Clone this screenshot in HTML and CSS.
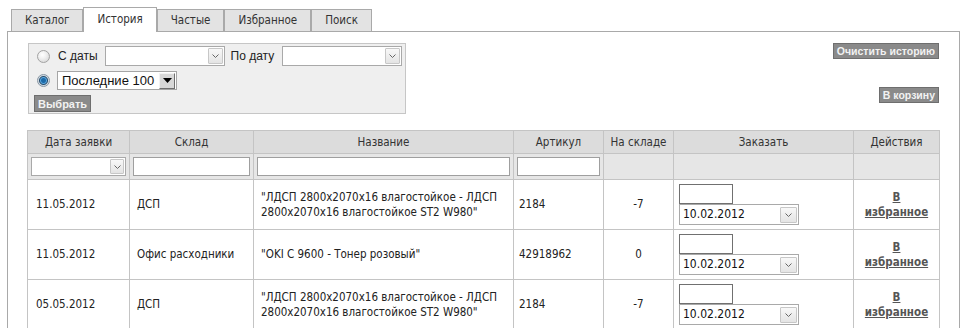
FILE: index.html
```html
<!DOCTYPE html>
<html lang="ru">
<head>
<meta charset="utf-8">
<title>История</title>
<link rel="stylesheet" href="styles.css">
</head>
<body>
<ul class="tabs">
  <li class="tab">Каталог</li>
  <li class="tab active">История</li>
  <li class="tab">Частые</li>
  <li class="tab">Избранное</li>
  <li class="tab">Поиск</li>
</ul>
<div class="panel">
  <div class="top">
    <form class="filter">
      <div class="frow">
        <input type="radio" name="mode" class="radio">
        <label class="lbl">С даты</label>
        <span class="sel w120"><span class="val"></span><span class="arr"><svg width="7" height="4" viewBox="0 0 7 4"><polyline points="0.5,0.5 3.5,3.5 6.5,0.5" fill="none" stroke="#666" stroke-width="1"/></svg></span></span>
        <label class="lbl lbl2">По дату</label>
        <span class="sel w120"><span class="val"></span><span class="arr"><svg width="7" height="4" viewBox="0 0 7 4"><polyline points="0.5,0.5 3.5,3.5 6.5,0.5" fill="none" stroke="#666" stroke-width="1"/></svg></span></span>
      </div>
      <div class="frow frow2">
        <input type="radio" name="mode" class="radio" checked>
        <span class="sel-old"><span class="val">Последние 100</span><span class="drop"><svg width="9" height="5" viewBox="0 0 9 5"><polygon points="0,0 9,0 4.5,5" fill="#000"/></svg></span></span>
      </div>
      <div class="frow frow3">
        <button type="button" class="btn">Выбрать</button>
      </div>
    </form>
    <div class="actions">
      <button type="button" class="btn">Очистить историю</button>
      <button type="button" class="btn btn-cart">В корзину</button>
    </div>
  </div>
  <table class="grid">
    <colgroup>
      <col class="c-date"><col class="c-store"><col class="c-name"><col class="c-art"><col class="c-stock"><col class="c-order"><col class="c-act">
    </colgroup>
    <thead>
      <tr class="hrow">
        <th>Дата заявки</th><th>Склад</th><th>Название</th><th>Артикул</th><th>На складе</th><th>Заказать</th><th>Действия</th>
      </tr>
      <tr class="frow-t">
        <td><span class="sel fsel"><span class="val"></span><span class="arr"><svg width="7" height="4" viewBox="0 0 7 4"><polyline points="0.5,0.5 3.5,3.5 6.5,0.5" fill="none" stroke="#666" stroke-width="1"/></svg></span></span></td>
        <td><input type="text" class="finput"></td>
        <td><input type="text" class="finput"></td>
        <td><input type="text" class="finput"></td>
        <td></td><td></td><td></td>
      </tr>
    </thead>
    <tbody>
      <tr>
        <td class="pd">11.05.2012</td>
        <td>ДСП</td>
        <td>"ЛДСП 2800x2070x16 влагостойкое - ЛДСП 2800x2070x16 влагостойкое ST2 W980"</td>
        <td class="art">2184</td>
        <td class="num">-7</td>
        <td class="order"><input type="text" class="qty"><span class="sel osel"><span class="val">10.02.2012</span><span class="arr"><svg width="7" height="4" viewBox="0 0 7 4"><polyline points="0.5,0.5 3.5,3.5 6.5,0.5" fill="none" stroke="#666" stroke-width="1"/></svg></span></span></td>
        <td class="act"><a href="#">В избранное</a></td>
      </tr>
      <tr>
        <td class="pd">11.05.2012</td>
        <td>Офис расходники</td>
        <td>"OKI C 9600 - Тонер розовый"</td>
        <td class="art">42918962</td>
        <td class="num">0</td>
        <td class="order"><input type="text" class="qty"><span class="sel osel"><span class="val">10.02.2012</span><span class="arr"><svg width="7" height="4" viewBox="0 0 7 4"><polyline points="0.5,0.5 3.5,3.5 6.5,0.5" fill="none" stroke="#666" stroke-width="1"/></svg></span></span></td>
        <td class="act"><a href="#">В избранное</a></td>
      </tr>
      <tr>
        <td class="pd">05.05.2012</td>
        <td>ДСП</td>
        <td>"ЛДСП 2800x2070x16 влагостойкое - ЛДСП 2800x2070x16 влагостойкое ST2 W980"</td>
        <td class="art">2184</td>
        <td class="num">-7</td>
        <td class="order"><input type="text" class="qty"><span class="sel osel"><span class="val">10.02.2012</span><span class="arr"><svg width="7" height="4" viewBox="0 0 7 4"><polyline points="0.5,0.5 3.5,3.5 6.5,0.5" fill="none" stroke="#666" stroke-width="1"/></svg></span></span></td>
        <td class="act"><a href="#">В избранное</a></td>
      </tr>
    </tbody>
  </table>
</div>
</body>
</html>
```

FILE: styles.css
```css
html, body {
  background: #fff;
}
body {
  margin: 0;
  padding: 0 5px 0 7px;
  font-family: "DejaVu Sans Condensed", "DejaVu Sans", sans-serif;
  font-stretch: semi-condensed;
  font-size: 11.5px;
  color: #222;
}

/* Tabs */
.tabs {
  display: flex;
  align-items: flex-end;
  gap: 0;
  list-style: none;
  margin: 7px 0 -1px 4px;
  padding: 0;
  position: relative;
  z-index: 1;
}
.tab {
  border: 1px solid #a9a9a9;
  border-bottom: 0;
  background: #e3e3e3;
  color: #333;
  height: 21px;
  line-height: 21px;
  padding: 0 13px;
  margin-bottom: 1px;
  font-size: 11.5px;
}
.tab.active {
  background: #fff;
  height: 22px;
  line-height: 22px;
  padding-bottom: 2px;
  margin-bottom: 0;
}

/* Panel */
.panel {
  border: 1px solid #a9a9a9;
  border-bottom: 0;
  padding: 11px 19px 0 19px;
  min-height: 320px;
}
.top {
  display: flex;
  justify-content: space-between;
  align-items: flex-start;
  margin: 0 1px 16px 1px;
}

/* Filter box */
.filter {
  box-sizing: border-box;
  width: 378px;
  height: 71px;
  margin: 0;
  border: 1px solid #c6c6c6;
  background: #efefef;
  padding: 2px 4px 0 5px;
  font-family: "Liberation Sans", Arial, sans-serif;
  font-stretch: normal;
  font-size: 12px;
  color: #222;
}
.frow {
  display: flex;
  align-items: center;
  height: 20px;
  white-space: nowrap;
}
.frow2 {
  margin-top: 5px;
  height: 19px;
}
.frow3 {
  margin-top: 5px;
  height: 17px;
}
.radio {
  appearance: none;
  -webkit-appearance: none;
  box-sizing: border-box;
  width: 13px;
  height: 13px;
  margin: 0 0 0 3px;
  border: 1px solid #a2a2a2;
  border-radius: 50%;
  background: radial-gradient(circle at 40% 35%, #ffffff 0%, #f2f2f2 35%, #cfcfcf 100%);
  flex: none;
}
.radio:checked {
  background: radial-gradient(circle at 50% 50%, #1c6aa8 0, #1c6aa8 2px, #5aa6de 3px, #2a4f6e 4px, #cfd8e0 5px, #eef1f4 100%);
  border-color: #8796a3;
}
.lbl {
  flex: none;
  margin: 0 7px 0 8px;
}
.lbl2 {
  margin: 0 8px 0 6px;
}

/* Fake selects */
.sel {
  box-sizing: border-box;
  display: flex;
  align-items: center;
  height: 20px;
  border: 1px solid #a9a9a9;
  background: #fff;
  padding: 0 1px 0 4px;
  flex: none;
}
.sel .val {
  flex: 1;
  white-space: nowrap;
  overflow: hidden;
}
.sel .arr {
  box-sizing: border-box;
  width: 15px;
  height: 16px;
  border: 1px solid #c7c7c7;
  border-radius: 1px;
  background: linear-gradient(#f8f8f8, #e4e4e4);
  display: flex;
  align-items: center;
  justify-content: center;
  flex: none;
}
.w120 {
  width: 120px;
}
.sel-old {
  box-sizing: border-box;
  display: flex;
  align-items: center;
  width: 120px;
  height: 19px;
  border: 1px solid #a5a5a5;
  background: #fff;
  margin-left: 7px;
  padding: 0 1px 0 4px;
  font-size: 13px;
  color: #111;
  flex: none;
}
.sel-old .val {
  flex: 1;
  white-space: nowrap;
}
.sel-old .drop {
  box-sizing: border-box;
  width: 16px;
  height: 16px;
  border: 1px solid;
  border-color: #f2f2f2 #6f6f6f #6f6f6f #f2f2f2;
  background: #d8d8d8;
  display: flex;
  align-items: center;
  justify-content: center;
}

/* Buttons */
.btn {
  box-sizing: border-box;
  height: 16px;
  padding: 0 3px;
  border: 1px solid #6e6e6e;
  background: #8a8a8a;
  color: #f2f2f2;
  font-family: "Liberation Sans", Arial, sans-serif;
  font-weight: bold;
  font-size: 10.5px;
  line-height: 14px;
  cursor: pointer;
}
.frow3 .btn {
  height: 17px;
  font-size: 11px;
  padding: 0 3px;
}
.actions {
  display: flex;
  flex-direction: column;
  align-items: flex-end;
}
.btn-cart {
  margin-top: 28px;
}

/* Table */
.grid {
  width: 913px;
  border-collapse: collapse;
  table-layout: fixed;
  font-size: 11.5px;
}
.c-date { width: 102px; }
.c-store { width: 124px; }
.c-name { width: 260px; }
.c-art { width: 90px; }
.c-stock { width: 70px; }
.c-order { width: 180px; }
.c-act { width: 86px; }
.grid th, .grid td {
  border: 1px solid #c4c4c4;
}
.hrow th {
  height: 22px;
  padding: 0;
  background: #dcdcdc;
  color: #333;
  font-weight: normal;
  font-size: 11.5px;
  text-align: center;
}
.frow-t td {
  height: 25px;
  padding: 0 3px 0 3px;
  background: #e6e6e6;
}
.finput {
  box-sizing: border-box;
  display: block;
  width: 100%;
  height: 19px;
  margin: 0;
  border: 1px solid #9f9f9f;
  background: #fff;
  padding: 0 2px;
}
.fsel {
  width: 95px;
  height: 19px;
}
.fsel .arr {
  height: 15px;
  width: 14px;
}
.grid tbody td {
  height: 45px;
  padding: 0 7px;
  line-height: 15px;
  vertical-align: middle;
  color: #222;
}
.grid tbody td.pd {
  padding-left: 8px;
}
.grid tbody td.art {
  padding-left: 5px;
}
.grid tbody td.num {
  text-align: center;
}
.grid tbody td.order {
  vertical-align: top;
  padding: 4px 5px 0 5px;
}
.qty {
  box-sizing: border-box;
  display: block;
  width: 54px;
  height: 20px;
  margin: 0;
  border: 1px solid #707070;
  background: #fff;
}
.osel {
  width: 120px;
  height: 21px;
  padding-left: 3px;
  font-size: 12px;
  color: #111;
}
.osel .arr {
  width: 17px;
  height: 16px;
}
.grid tbody td.act {
  text-align: center;
  padding: 0 9px;
}
.act a {
  color: #555;
  font-weight: bold;
  font-size: 11.5px;
  text-decoration: underline;
}
```
